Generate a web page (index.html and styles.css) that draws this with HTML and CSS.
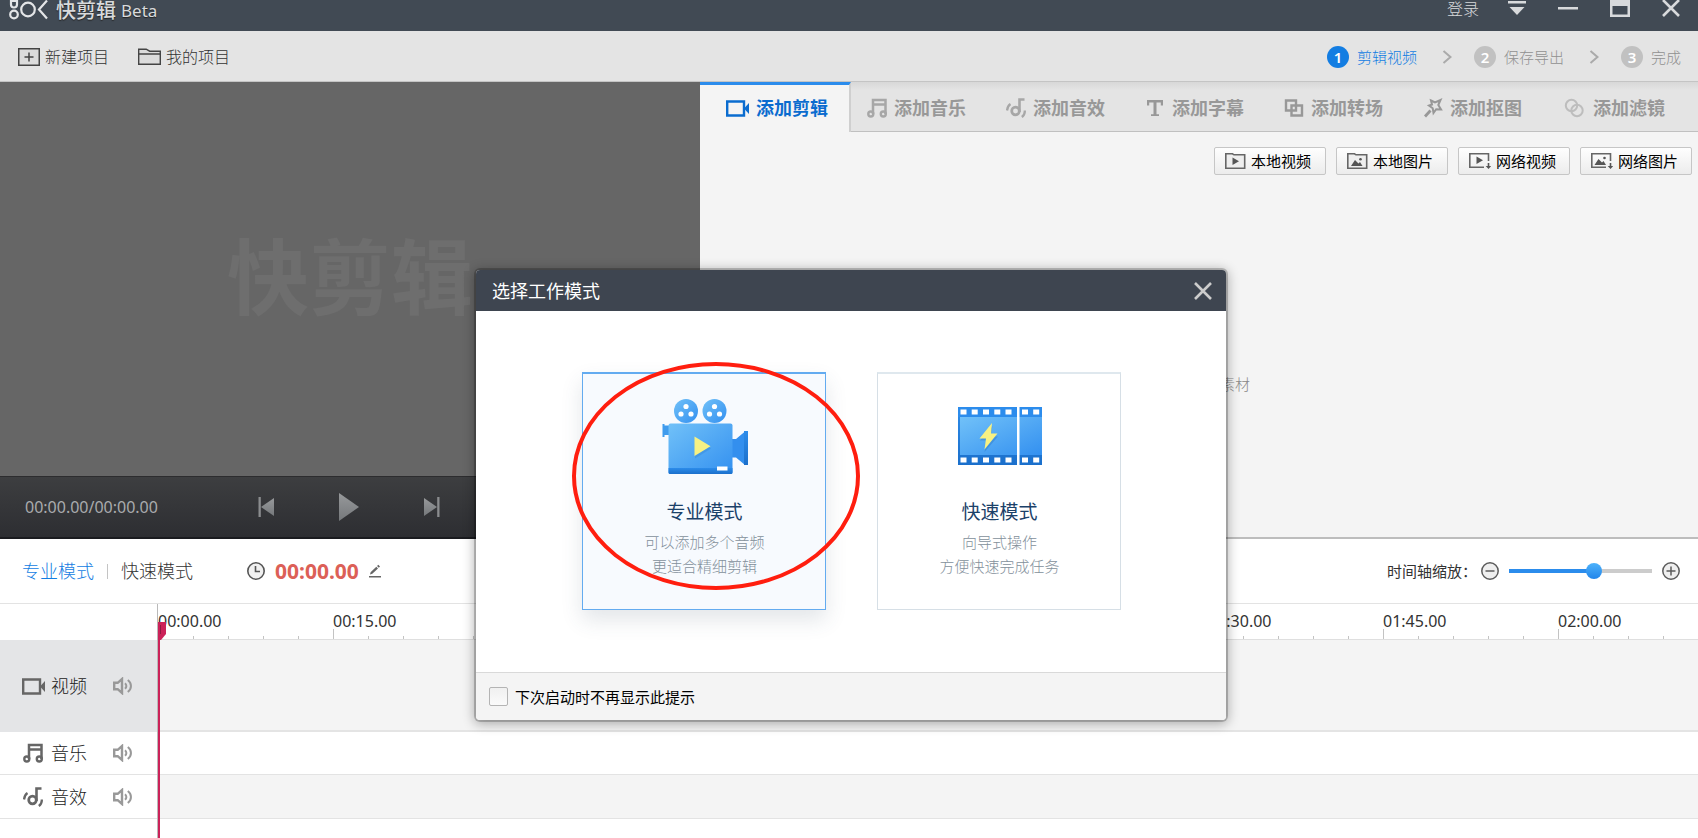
FILE: index.html
```html
<!DOCTYPE html>
<html lang="zh-CN">
<head>
<meta charset="utf-8">
<title>快剪辑 Beta</title>
<link rel="stylesheet" href="styles.css">
</head>
<body>
<svg class="defs" aria-hidden="true">
  <defs>
    <linearGradient id="g-body" x1="0" y1="0" x2="1" y2="1"><stop offset="0" stop-color="#71c1f8"/><stop offset="1" stop-color="#3390f0"/></linearGradient>
    <linearGradient id="g-base" x1="0" y1="0" x2="0" y2="1"><stop offset="0" stop-color="#2c8cea"/><stop offset="1" stop-color="#1b6fcb"/></linearGradient>
    <linearGradient id="g-play" x1="0" y1="0" x2="0" y2="1"><stop offset="0" stop-color="#97999b"/><stop offset="1" stop-color="#75787b"/></linearGradient>
    <symbol id="i-camera" viewBox="0 0 23 17"><path d="M1.200 1.500h16.800v14H1.200z" fill="none" stroke="currentColor" stroke-width="2.400"/><path d="M18 8.500l5-5.500v11z" fill="currentColor"/></symbol>
    <symbol id="i-music" viewBox="0 0 20 20"><path d="M6 16V2h12.500v14M6 6.500h12.500" fill="none" stroke="currentColor" stroke-width="2.500"/><circle cx="3.800" cy="16" r="2.500" fill="none" stroke="currentColor" stroke-width="2.400"/><circle cx="16.300" cy="16" r="2.500" fill="none" stroke="currentColor" stroke-width="2.400"/></symbol>
    <symbol id="i-sfx" viewBox="0 0 20 20"><path d="M18.500 1.500h-5V14" fill="none" stroke="currentColor" stroke-width="2.600"/><circle cx="9.500" cy="13" r="3.800" fill="none" stroke="currentColor" stroke-width="2.700"/><path d="M4.500 6C2.500 7.200 1.500 9 1 12.500M18.800 12.500c.2 3-.8 5-3 6.500" fill="none" stroke="currentColor" stroke-width="2.300"/></symbol>
    <symbol id="i-speaker" viewBox="0 0 20 18"><path d="M1.200 5.800h3.500L9 2v14L4.700 12.200H1.200z" fill="none" stroke="currentColor" stroke-width="2.400"/><path d="M12 6.200c1.800 1.600 1.800 4 0 5.600M14.800 3c4.200 3.200 4.200 8.800 0 12" fill="none" stroke="currentColor" stroke-width="2"/></symbol>
    <symbol id="i-next-step" viewBox="0 0 10 14"><path d="M1.500 1l7 6-7 6" fill="none" stroke="currentColor" stroke-width="2"/></symbol>
    <symbol id="i-skip" viewBox="0 0 16 22"><path d="M16 2v18L3 11z" fill="url(#g-play)"/><path d="M.5 1h2.300v20H.5z" fill="#8b8d8f"/></symbol>
    <symbol id="i-close" viewBox="0 0 18 18"><path d="M1 1l16 16M17 1L1 17" fill="none" stroke="currentColor" stroke-width="2.600"/></symbol>
  </defs>
</svg>

<div class="app">
  <header class="titlebar">
    <div class="brand">
      <svg class="brand-mark" width="39" height="20" viewBox="0 0 39 20" fill="none" stroke="#e3e5e7" stroke-width="2.200"><path d="M8 1v3.500a3 3 0 0 1-6 0V1z"/><circle cx="5" cy="14.500" r="3.800"/><circle cx="19" cy="9.500" r="6.800"/><path d="M38 0.500L30 9.500l8 9"/></svg>
      <strong class="brand-name">快剪辑</strong>
      <span class="brand-tag">Beta</span>
    </div>
    <div class="window-tools">
      <button class="plain login">登录</button>
      <button class="plain" aria-label="菜单"><svg width="18" height="18" viewBox="0 0 18 18" fill="currentColor"><path d="M0 1h18v2.500H0zM1.500 7h15L9 15z"/></svg></button>
      <button class="plain" aria-label="最小化"><svg width="20" height="18" viewBox="0 0 20 18"><path d="M0 7h20v2.500H0z" fill="currentColor"/></svg></button>
      <button class="plain" aria-label="最大化"><svg width="20" height="18" viewBox="0 0 20 18"><path d="M0 0h20v17H0zM2.500 6v8.500h15V6z" fill="currentColor" fill-rule="evenodd"/></svg></button>
      <button class="plain" aria-label="关闭"><svg width="18" height="18"><use href="#i-close" y="-1"/></svg></button>
    </div>
  </header>

  <div class="toolbar">
    <div class="projects">
      <button class="plain"><svg width="22" height="18" viewBox="0 0 22 18" fill="#dcdcdc" stroke="#444"><path d="M.75.75h20.500v16.500H.75z" stroke-width="1.500"/><path d="M11 4.500v9M6.500 9h9" stroke-width="1.500"/></svg>新建项目</button>
      <button class="plain"><svg width="23" height="18" viewBox="0 0 23 18" fill="#dcdcdc" stroke="#444" stroke-width="1.400"><path d="M.7 16.300V1.200h7.500l3.500 2h10.600v13.100zM.7 6h21.600"/></svg>我的项目</button>
    </div>
    <ol class="steps">
      <li class="step current"><span class="num">1</span>剪辑视频</li>
      <li class="arrow"><svg width="10" height="14"><use href="#i-next-step"/></svg></li>
      <li class="step"><span class="num">2</span>保存导出</li>
      <li class="arrow"><svg width="10" height="14"><use href="#i-next-step"/></svg></li>
      <li class="step"><span class="num">3</span>完成</li>
    </ol>
  </div>

  <div class="workspace">
    <section class="preview">
      <div class="screen"><span class="watermark">快剪辑</span></div>
      <div class="player">
        <span class="clock">00:00.00/00:00.00</span>
        <div class="transport">
          <button class="plain" aria-label="上一帧"><svg width="16" height="22"><use href="#i-skip"/></svg></button>
          <button class="plain" aria-label="播放"><svg width="20" height="28" viewBox="0 0 20 28"><path d="M0 0v28l20-14z" fill="url(#g-play)"/></svg></button>
          <button class="plain flip" aria-label="下一帧"><svg width="16" height="22"><use href="#i-skip"/></svg></button>
        </div>
      </div>
    </section>
    <section class="library">
      <nav class="tabs">
        <button class="tab active"><svg width="23" height="17"><use href="#i-camera"/></svg>添加剪辑</button>
        <button class="tab"><svg class="soft" width="20" height="20"><use href="#i-music"/></svg>添加音乐</button>
        <button class="tab"><svg class="soft" width="20" height="20"><use href="#i-sfx"/></svg>添加音效</button>
        <button class="tab"><svg width="20" height="18" viewBox="0 0 20 18"><path d="M2 1h16v5.500h-2.200V3.500h-4.300v11.700H14V17H6v-1.800h2.500V3.500H4.200v3H2z" fill="currentColor"/></svg>添加字幕</button>
        <button class="tab"><svg width="20" height="18" viewBox="0 0 20 18" fill="none" stroke="currentColor" stroke-width="2.400"><path d="M2 1.500h10v10H2zM7.500 6.500H18v10H7.500z"/></svg>添加转场</button>
        <button class="tab"><svg width="20" height="20" viewBox="0 0 20 20" fill="none" stroke="currentColor"><path d="M8 2.500l4 2L17.500 2l-2.200 5 2.700 4.500-4.800-.3L10.500 15l-.8-4.800L6 7.500l3-1z" stroke-width="2"/><path d="M7.500 12.500L2 18.500" stroke-width="2.800"/></svg>添加抠图</button>
        <button class="tab last"><svg class="softer" width="20" height="20" viewBox="0 0 20 20" fill="none" stroke="currentColor" stroke-width="2"><circle cx="7.500" cy="7.500" r="5.700"/><circle cx="13" cy="12.500" r="5.700"/></svg>添加滤镜</button>
      </nav>
      <div class="sources">
        <button class="source"><svg width="21" height="16" viewBox="0 0 21 16"><path d="M.8 15.200V.8h6.700l1.500 1h10.700v13.400z" fill="#eee" stroke="#666" stroke-width="1.600"/><path d="M7.500 4.500v7.500l6.500-3.700z" fill="#555"/></svg>本地视频</button>
        <button class="source"><svg width="21" height="16" viewBox="0 0 21 16"><path d="M.8 15.200V.8h6.700l1.500 1h10.700v13.400z" fill="#eee" stroke="#666" stroke-width="1.600"/><path d="M4 13l4-6 3.500 3.500L13 9l2.500 4z" fill="#555"/><circle cx="13.500" cy="6.200" r="1.300" fill="#555"/></svg>本地图片</button>
        <button class="source"><svg width="22" height="16" viewBox="0 0 22 16"><path d="M15 14.200H.8V.8h18.700V8" fill="none" stroke="#666" stroke-width="1.600"/><path d="M7.500 3.500V11l6.500-3.700z" fill="#555"/><path d="M18.700 10h1.600v3h2l-2.800 3-2.800-3h2z" fill="#555"/></svg>网络视频</button>
        <button class="source"><svg width="22" height="16" viewBox="0 0 22 16"><path d="M15 14.200H.8V.8h18.700V8" fill="none" stroke="#666" stroke-width="1.600"/><path d="M3.500 12l4-6 3.500 3.500L12.500 8l2.500 4z" fill="#555"/><circle cx="13.500" cy="5" r="1.300" fill="#555"/><path d="M18.700 10h1.600v3h2l-2.800 3-2.800-3h2z" fill="#555"/></svg>网络图片</button>
      </div>
      <p class="empty">素材</p>
    </section>
  </div>

  <div class="timebar">
    <div class="modes">
      <button class="plain mode on">专业模式</button>
      <button class="plain mode">快速模式</button>
    </div>
    <div class="position">
      <svg width="18" height="18" viewBox="0 0 18 18" fill="#f0f0f0" stroke="#555" stroke-width="1.600"><circle cx="9" cy="9" r="8.200"/><path d="M8.500 4v5.500H13" fill="none"/></svg>
      <output class="timecode">00:00.00</output>
      <button class="plain" aria-label="编辑时间"><svg width="12" height="14" viewBox="0 0 12 14" fill="#666"><path d="M0 12h12v1.500H0zM1 10.500l.6-2.300 5.700-5.400 1.700 1.700-5.700 5.300zM8 2l1.300-1.300L11 2.400 9.800 3.700z"/></svg></button>
    </div>
    <div class="zoom">
      <label for="zoom">时间轴缩放：</label>
      <button class="plain" aria-label="缩小"><svg width="18" height="18" viewBox="0 0 18 18" fill="#efefef" stroke="#5c5c5c" stroke-width="1.500"><circle cx="9" cy="9" r="8.200"/><path d="M4.500 9h9"/></svg></button>
      <input id="zoom" type="range" min="0" max="100" value="61">
      <button class="plain" aria-label="放大"><svg width="18" height="18" viewBox="0 0 18 18" fill="#efefef" stroke="#5c5c5c" stroke-width="1.500"><circle cx="9" cy="9" r="8.200"/><path d="M4.500 9h9M9 4.500v9"/></svg></button>
    </div>
  </div>

  <div class="timeline">
    <div class="heads">
      <div class="head corner"></div>
      <div class="head video"><svg width="23" height="17"><use href="#i-camera"/></svg><span>视频</span><button class="plain" aria-label="视频静音"><svg width="20" height="18"><use href="#i-speaker"/></svg></button></div>
      <div class="head music"><svg width="23" height="20" viewBox="0 0 23 20"><use href="#i-music" width="20" height="20" x="1"/></svg><span>音乐</span><button class="plain" aria-label="音乐静音"><svg width="20" height="18"><use href="#i-speaker"/></svg></button></div>
      <div class="head sfx"><svg width="23" height="20" viewBox="0 0 23 20"><use href="#i-sfx" width="20" height="20" x="1"/></svg><span>音效</span><button class="plain" aria-label="音效静音"><svg width="20" height="18"><use href="#i-speaker"/></svg></button></div>
    </div>
    <div class="lanes">
      <div class="ruler">
        <span class="mark">00:00.00</span><span class="mark">00:15.00</span><span class="mark"></span><span class="mark"></span><span class="mark"></span><span class="mark"></span><span class="mark">01:30.00</span><span class="mark">01:45.00</span><span class="mark">02:00.00</span>
      </div>
      <div class="lane video"></div>
      <div class="lane music"></div>
      <div class="lane sfx"></div>
      <div class="playhead"><svg width="8" height="18" viewBox="0 0 8 18"><path d="M0 0h8v12l-5 6H0z" fill="#cb2259"/><path d="M2.500 3v9" stroke="#8f1a42"/></svg></div>
    </div>
  </div>
</div>

<div class="overlay">
  <section class="dialog" role="dialog" aria-labelledby="dialog-title">
    <header class="dialog-head">
      <h1 id="dialog-title">选择工作模式</h1>
      <button class="plain" aria-label="关闭对话框"><svg width="18" height="18"><use href="#i-close"/></svg></button>
    </header>
    <div class="cards">
      <button class="card selected">
        <svg width="86" height="76" viewBox="0 0 86 76">
          <g fill="url(#g-body)"><circle cx="24" cy="12" r="12"/><circle cx="52.500" cy="12" r="12"/></g>
          <g fill="#fff"><circle cx="24" cy="7.500" r="2.600"/><circle cx="19" cy="15" r="2.600"/><circle cx="29" cy="15" r="2.600"/><circle cx="52.500" cy="7.500" r="2.600"/><circle cx="47.500" cy="15" r="2.600"/><circle cx="57.500" cy="15" r="2.600"/></g>
          <path d="M.5 25h2v1.500H8v9.500H2.500v2h-2z" fill="#3f9bed"/>
          <path d="M69 40h5l9-7.500V66l-9-7.500h-5z" fill="#338fee"/><path d="M82 32h4v34h-4z" fill="url(#g-base)"/>
          <rect x="6.500" y="24.500" width="64" height="50.500" rx="2" fill="url(#g-body)"/>
          <path d="M6.500 69h64v4.500q0 1.500-1.500 1.500H8q-1.500 0-1.500-1.500z" fill="url(#g-base)"/>
          <path d="M55 67.500h10.500v4H55z" fill="#fff"/>
          <path d="M33 39.500v20l16-10z" fill="#2f7fd0" opacity=".35"/><path d="M32.500 37.500v19.500l16-9.700z" fill="#f7f183"/>
        </svg>
        <span class="card-title">专业模式</span>
        <span class="card-text">可以添加多个音频<br>更适合精细剪辑</span>
      </button>
      <button class="card">
        <svg width="84" height="76" viewBox="0 0 84 76">
          <path d="M0 8h84v58H0z" fill="url(#g-base)"/><path d="M0 8h84v10H0z" fill="#2c8cec"/>
          <path d="M2 18h82v38H2z" fill="url(#g-body)"/>
          <path d="M59 8h2.500v58H59z" fill="#fff"/>
          <g fill="#fff"><path id="holes" d="M2.500 10.500h6v5h-6zM13.700 10.500h6v5h-6zM25 10.500h6v5h-6zM36.300 10.500h6v5h-6zM47.500 10.500h6v5h-6zM64 10.500h6v5h-6zM75.200 10.500h6v5h-6z"/><use href="#holes" y="48"/></g>
          <path d="M34.500 27L22 41.500h6.500L26.500 53 40 37.500h-7.500z" fill="#1e64b4" opacity=".3"/>
          <path d="M34 24L21.500 39.500H28L26.500 50.500 39.500 34.500H33z" fill="#f7f183"/>
        </svg>
        <span class="card-title">快速模式</span>
        <span class="card-text">向导式操作<br>方便快速完成任务</span>
      </button>
    </div>
    <footer class="dialog-foot">
      <input id="skip" type="checkbox"><label for="skip">下次启动时不再显示此提示</label>
    </footer>
    <svg class="ring" width="292" height="232" viewBox="0 0 292 232" aria-hidden="true"><ellipse cx="146" cy="116" rx="142" ry="112" fill="none" stroke="#ff1e0f" stroke-width="4"/></svg>
  </section>
</div>
</body>
</html>
```

FILE: styles.css
```css
* { box-sizing: border-box; }

html, body { height: 100%; margin: 0; }

body {
  position: relative;
  overflow: hidden;
  font: 400 15px/20px "Noto Sans", "Noto Sans CJK SC", sans-serif;
  color: #333;
  background: #fff;
}

svg { display: block; flex: none; }
.defs { position: absolute; width: 0; height: 0; }

button { font: inherit; color: inherit; cursor: pointer; }
.plain { display: flex; align-items: center; padding: 0; border: 0; background: none; }

.app { display: flex; flex-direction: column; min-height: 100%; }

/* Title bar */
.titlebar {
  display: flex;
  justify-content: space-between;
  align-items: flex-start;
  height: 31px;
  padding: 0 18px 0 9px;
  color: #d8dadc;
  background: #414a54;
}
.brand { display: flex; align-items: center; height: 22px; text-shadow: 0 1px 1px #222; }
.brand-mark { margin-bottom: 2px; }
.brand-name { margin: 0 5px 0 8px; font-size: 20px; font-weight: 500; line-height: 22px; }
.brand-tag { font-size: 17px; }
.window-tools { display: flex; align-items: center; gap: 32px; height: 18px; }
.login { margin-right: -3px; font-size: 16px; font-weight: 300; line-height: 16px; }

/* Project toolbar and wizard steps */
.toolbar {
  display: flex;
  justify-content: space-between;
  align-items: center;
  height: 51px;
  padding: 1px 17px 0 18px;
  background: #e4e4e4;
  border-bottom: 1px solid #c4c4c4;
}
.projects { display: flex; gap: 29px; font-size: 16px; font-weight: 300; }
.projects .plain { gap: 5px; }
.steps { display: flex; align-items: center; margin: 0; padding: 0; list-style: none; font-weight: 300; color: #909090; }
.step { display: flex; align-items: center; gap: 8px; }
.step.current { color: #137de2; }
.num {
  width: 22px;
  border-radius: 50%;
  font-weight: 600;
  line-height: 22px;
  text-align: center;
  color: #fff;
  background: #c1c1c1;
}
.current .num { background: #137de2; }
.arrow { padding: 0 22px 0 25px; color: #aaa; }

/* Preview and library */
.workspace { display: flex; height: 457px; }
.preview { display: flex; flex-direction: column; width: 700px; }
.screen { display: flex; flex: 1; align-items: center; justify-content: center; padding-bottom: 6px; background: #666; }
.watermark { font-size: 82px; font-weight: 700; line-height: 82px; color: #6e6e6e; }
.player {
  display: grid;
  grid-template-columns: 1fr auto 1fr;
  align-items: center;
  height: 63px;
  padding: 0 0 0 25px;
  color: #a9abad;
  background: linear-gradient(#3d3e40, #2d2e32);
  border-top: 1px solid #2c2c2e;
  border-bottom: 2px solid #1a1b1f;
}
.clock { font-size: 16px; }
.transport { display: flex; align-items: center; gap: 65px; margin-left: -28px; }
.flip { transform: scaleX(-1); }

.library { display: flex; flex: 1; flex-direction: column; background: #f4f4f4; border-bottom: 2px solid #bdbdbd; }
.tabs { display: flex; height: 50px; }
.tab {
  display: flex;
  flex: 0 0 139px;
  align-items: center;
  gap: 7px;
  padding: 3px 0 0 16px;
  border: 0;
  border-bottom: 1px solid #c0c0c0;
  font-size: 18px;
  font-weight: 700;
  white-space: nowrap;
  color: #989898;
  background: linear-gradient(#d8d8d8, #e4e4e4 8px);
}
.tab.active {
  flex-basis: 151px;
  padding: 0 0 1px 26px;
  border-top: 3px solid #2b8cec;
  border-right: 2px solid #cfcfcf;
  border-bottom: 0;
  color: #0a6ccf;
  background: #f4f4f4;
}
.tab.last { flex: 1; gap: 9px; padding-left: 18px; }
.soft { opacity: .8; }
.softer { opacity: .5; }
.sources { display: flex; justify-content: flex-end; gap: 10px; padding: 15px 6px 0 0; }
.source {
  display: flex;
  align-items: center;
  gap: 5px;
  width: 112px;
  height: 28px;
  padding: 0 0 0 10px;
  border: 1px solid #c6c6c6;
  border-radius: 2px;
  white-space: nowrap;
  color: #000;
  background: linear-gradient(#fefefe, #ececec);
}
.empty { margin: auto; padding: 56px 0 0 72px; font-weight: 300; color: #888; }

/* Time bar */
.timebar { display: flex; align-items: center; height: 65px; padding: 0 18px 0 22px; border-bottom: 1px solid #e3e3e3; }
.modes { display: flex; align-items: center; font-size: 18px; font-weight: 300; }
.mode.on { color: #137de2; }
.mode + .mode { background: linear-gradient(#c4c4c4, #c4c4c4) 13px center / 1px 15px no-repeat; padding-left: 27px; }
.position { display: flex; align-items: center; gap: 10px; margin-left: 54px; }
.timecode { font-size: 21px; font-weight: 700; line-height: 24px; color: #dc6057; }
.zoom { display: flex; align-items: center; gap: 10px; margin-left: auto; }
.zoom label { margin-right: -6px; }
.zoom input {
  width: 143px;
  height: 16px;
  margin: 0;
  appearance: none;
  background: linear-gradient(90deg, #2b8cec 60%, #ccc 60%) center / 100% 4px no-repeat;
}
.zoom input::-webkit-slider-thumb {
  appearance: none;
  width: 16px;
  height: 16px;
  border-radius: 50%;
  background: linear-gradient(#4db2fb, #2285ea);
}

/* Timeline */
.timeline { display: flex; flex: 1; }
.heads { width: 158px; border-right: 1px solid #b9b9b9; }
.head { display: flex; align-items: center; padding-left: 22px; font-size: 18px; font-weight: 300; color: #666; }
.head span { margin: 0 26px 0 6px; color: #222; }
.head .plain { color: #999; }
.head.video { background: #e4e5e7; }
.lanes { position: relative; flex: 1; min-width: 0; overflow: hidden; }
.corner, .ruler { height: 36px; }
.ruler {
  display: flex;
  border-bottom: 1px solid #dfdfdf;
  background: repeating-linear-gradient(90deg, #c3c3c3 0 1px, transparent 1px 35px) 0 100% / 100% 3px no-repeat;
}
.mark {
  flex: 0 0 175px;
  padding-top: 7px;
  font-size: 16px;
  background: linear-gradient(#c3c3c3, #c3c3c3) 0 100% / 1px 10px no-repeat;
}
.video { height: 92px; }
.music { height: 43px; border-bottom: 1px solid #e3e3e3; }
.sfx { height: 44px; border-bottom: 1px solid #e3e3e3; }
.lane.video { background: #f4f4f4; border-bottom: 2px solid #e4e4e4; }
.lane.sfx { background: #f4f4f4; }
.playhead { position: absolute; top: 18px; bottom: 0; left: 0; border-left: 2px solid #cb2259; }
.playhead svg { margin-left: -2px; }

/* Mode dialog */
.overlay { position: absolute; top: 270px; left: 4px; right: 0; display: flex; justify-content: center; }
.dialog {
  position: relative;
  width: 750px;
  border-radius: 4px;
  background: #fff;
  box-shadow: 0 0 0 2px rgba(0, 0, 0, .2), 0 2px 12px 2px rgba(0, 0, 0, .3);
}
.dialog-head {
  display: flex;
  align-items: center;
  justify-content: space-between;
  height: 41px;
  padding: 0 14px 0 16px;
  border-radius: 4px 4px 0 0;
  color: #ccc;
  background: #3e4550;
}
.dialog-head h1 { margin: 0; font-size: 18px; font-weight: 400; color: #fff; }
.cards { display: flex; justify-content: center; gap: 51px; padding: 61px 0 62px; }
.card {
  display: flex;
  flex-direction: column;
  align-items: center;
  width: 244px;
  height: 238px;
  padding: 25px 0 0 2px;
  border: 1px solid #d6dfe6;
  border-top: 2px solid #dfe8ee;
  background: #fff;
}
.card.selected { border-color: #63abf0; background: #f7fafe; box-shadow: 0 10px 20px rgba(60, 80, 100, .14); }
.card-title { margin-top: 25px; font-size: 19px; line-height: 24px; color: #1b4169; }
.card-text { margin-top: 6px; font-weight: 300; line-height: 24px; color: #83909b; }
.dialog-foot {
  display: flex;
  align-items: center;
  gap: 7px;
  height: 48px;
  padding-left: 13px;
  border-top: 1px solid #d9d9d9;
  border-radius: 0 0 4px 4px;
  color: #000;
  background: #f4f4f4;
}
.dialog-foot input {
  width: 19px;
  height: 19px;
  margin: 0;
  appearance: none;
  border: 1px solid #b4b4b4;
  border-radius: 2px;
  background: linear-gradient(#f0f0f0, #fafafa);
}
.ring { position: absolute; top: 90px; left: 94px; pointer-events: none; }
```
